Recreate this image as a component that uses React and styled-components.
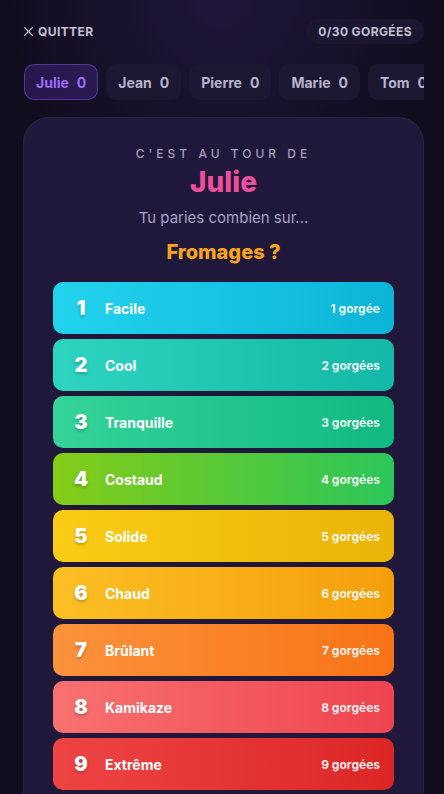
import React from 'react';
import styled, { createGlobalStyle } from 'styled-components';

const GlobalStyle = createGlobalStyle`
  html, body {
    margin: 0;
    padding: 0;
    background: #110d1f;
    font-family: Inter, "Noto Sans", sans-serif;
    -webkit-font-smoothing: antialiased;
  }
  * { box-sizing: border-box; }
`;

const Page = styled.div`
  min-height: 794px;
  padding: 18px 20px 0 24px;
  background: radial-gradient(ellipse 60% 260px at 50% 0%, rgba(60, 40, 110, 0.35), transparent 80%), #110d1f;
  overflow: hidden;
`;

const TopBar = styled.div`
  display: flex;
  align-items: center;
  justify-content: space-between;
  height: 26px;
`;

const QuitButton = styled.button`
  display: flex;
  align-items: center;
  gap: 3px;
  margin-left: -2px;
  padding: 0;
  border: none;
  background: none;
  color: #c3c0d6;
  font-family: inherit;
  font-size: 12px;
  font-weight: 700;
  letter-spacing: 0.4px;
`;

const Counter = styled.div`
  padding: 5px 12px;
  border-radius: 999px;
  background: #1c1731;
  color: #c3c0d6;
  font-size: 12px;
  font-weight: 700;
  letter-spacing: 0.4px;
`;

const Tabs = styled.div`
  display: flex;
  gap: 8px;
  margin-top: 20px;
  overflow: hidden;
`;

const Tab = styled.div`
  flex: none;
  display: flex;
  gap: 8px;
  align-items: center;
  height: 36px;
  padding: 0 11px;
  border-radius: 10px;
  font-size: 14px;
  font-weight: 700;
  background: ${p => (p.$active ? 'rgba(124, 58, 237, 0.22)' : '#1d1832')};
  border: 1px solid ${p => (p.$active ? 'rgba(139, 92, 246, 0.45)' : 'transparent')};
  color: ${p => (p.$active ? '#9d6bf7' : '#b8b4cc')};
`;

const Card = styled.div`
  margin: 17px 0 0 -1px;
  padding: 30px 29px 28px;
  border-radius: 26px;
  background: #20183a;
  border: 1px solid rgba(255, 255, 255, 0.05);
  display: flex;
  flex-direction: column;
  align-items: center;
`;

const Eyebrow = styled.div`
  margin-top: -2px;
  color: #a29eba;
  font-size: 12px;
  font-weight: 500;
  letter-spacing: 4px;
  line-height: 16px;
`;

const PlayerName = styled.div`
  margin-top: 3px;
  color: #ec4f9c;
  font-size: 28px;
  font-weight: 800;
  line-height: 34px;
`;

const Question = styled.div`
  margin-top: 9px;
  color: #a7a2c4;
  font-size: 15px;
  line-height: 20px;
`;

const Theme = styled.div`
  margin-top: 11px;
  color: #f5a41c;
  font-size: 20px;
  font-weight: 800;
  line-height: 26px;
`;

const Levels = styled.div`
  align-self: stretch;
  margin-top: 17px;
  display: flex;
  flex-direction: column;
  gap: 5px;
`;

const Level = styled.button`
  display: flex;
  align-items: center;
  height: 52px;
  padding: 0 14px 0 17px;
  border: none;
  border-radius: 10px;
  background: linear-gradient(90deg, ${p => p.$from}, ${p => p.$to});
  color: #fff;
  font-family: inherit;
  text-align: left;
`;

const Num = styled.span`
  width: 22px;
  text-align: center;
  font-size: 20px;
  font-weight: 900;
  text-shadow: 0 2px 3px rgba(0, 0, 0, 0.22);
`;

const Label = styled.span`
  flex: 1;
  margin-left: 13px;
  font-size: 14px;
  font-weight: 700;
`;

const Sips = styled.span`
  font-size: 12px;
  font-weight: 700;
  color: rgba(255, 255, 255, 0.92);
`;

const players = ['Julie', 'Jean', 'Pierre', 'Marie', 'Tom'];

const levels = [
  ['Facile', '#22d3ee', '#0cb4d6'],
  ['Cool', '#2dd4bf', '#14b8a6'],
  ['Tranquille', '#34d399', '#10b981'],
  ['Costaud', '#84cc16', '#2bc65a'],
  ['Solide', '#facc15', '#eab308'],
  ['Chaud', '#fbbf24', '#f59e0b'],
  ['Brûlant', '#fb923c', '#f97316'],
  ['Kamikaze', '#f87171', '#ef4450'],
  ['Extrême', '#ef4444', '#dc2626'],
];

const CloseIcon = () => (
  <svg width="13" height="13" viewBox="0 0 24 24" fill="none" stroke="currentColor" strokeWidth="2.2" strokeLinecap="round">
    <path d="M5 5l14 14M19 5L5 19" />
  </svg>
);

export default function App() {
  return (
    <Page>
      <GlobalStyle />
      <TopBar>
        <QuitButton><CloseIcon />QUITTER</QuitButton>
        <Counter>0/30 GORGÉES</Counter>
      </TopBar>
      <Tabs>
        {players.map((name, i) => (
          <Tab key={name} $active={i === 0}>
            <span>{name}</span>
            <span>0</span>
          </Tab>
        ))}
      </Tabs>
      <Card>
        <Eyebrow>C'EST AU TOUR DE</Eyebrow>
        <PlayerName>Julie</PlayerName>
        <Question>Tu paries combien sur...</Question>
        <Theme>Fromages ?</Theme>
        <Levels>
          {levels.map(([label, from, to], i) => (
            <Level key={label} $from={from} $to={to}>
              <Num>{i + 1}</Num>
              <Label>{label}</Label>
              <Sips>{i + 1} {i === 0 ? 'gorgée' : 'gorgées'}</Sips>
            </Level>
          ))}
        </Levels>
      </Card>
    </Page>
  );
}
